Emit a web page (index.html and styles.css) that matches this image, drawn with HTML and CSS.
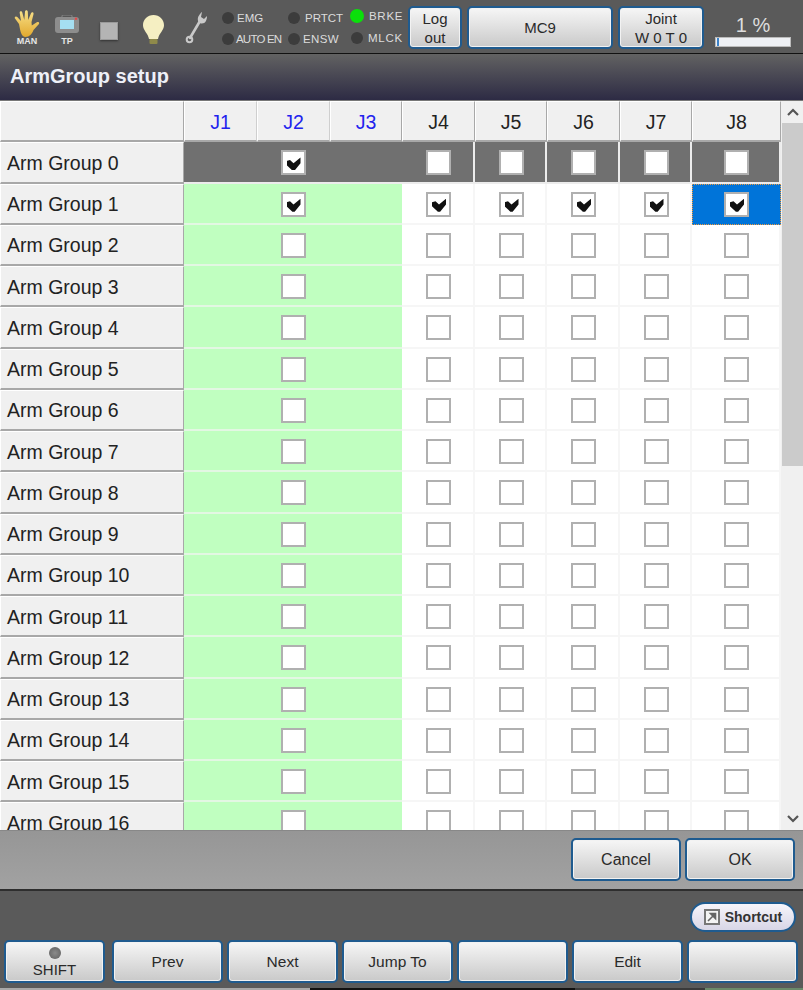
FILE: index.html
```html
<!DOCTYPE html>
<html lang="en">
<head>
<meta charset="utf-8">
<title>ArmGroup setup</title>
<link rel="stylesheet" href="styles.css">
</head>
<body>
<div class="app">
  <header class="topbar">
    <div class="tool tool-man">
      <svg class="icon" width="26" height="27" viewBox="0 0 26 27">
        <defs><linearGradient id="handfill" x1="0" y1="0" x2="0" y2="1"><stop offset="0" stop-color="#f7e08a"/><stop offset="1" stop-color="#e2a92e"/></linearGradient></defs>
        <path fill="url(#handfill)" d="M5 14 1 8.500C0 7 2 5.500 3.300 7L7 11 5.700 3C5.400 1 7.800.6 8.300 2.500L10.300 10 11 1.700C11.100-.3 13.700-.3 13.800 1.700L14.200 10 17 3.300C17.700 1.500 20 2.300 19.500 4.200L17.500 12 17.800 15.500 22.800 12.300C24.700 11.200 26 13.200 24.500 14.500L19.500 20C18 24 15.500 27 11.500 27 7.500 27 6.500 22 5 14Z"/>
      </svg>
      <span class="tool-label">MAN</span>
    </div>
    <div class="tool tool-tp">
      <svg class="icon" width="24" height="18" viewBox="0 0 24 18">
        <rect x="7" y="0" width="10" height="4" rx="1" fill="#555" stroke="#888"/>
        <rect x="0" y="2" width="24" height="16" rx="3" fill="#8d8d8d"/>
        <rect x="5" y="5" width="14" height="9" fill="#a5dff2"/>
        <circle cx="21" cy="3.800" r="1.300" fill="#e04848"/>
      </svg>
      <span class="tool-label">TP</span>
    </div>
    <div class="stop-square"></div>
    <svg class="bulb" width="21" height="30" viewBox="0 0 21 30">
      <path fill="#f5efc2" d="M10.500 0C4.500 0 0 4.500 0 10.200 0 15.500 5 18 6 24H15C16 18 21 15.500 21 10.200 21 4.500 16.500 0 10.500 0Z"/>
      <rect x="6.500" y="24" width="8" height="5" rx="1" fill="#8f8a4a"/>
    </svg>
    <svg class="wrench" width="22" height="32" viewBox="0 0 22 32">
      <path fill="none" stroke="#c9c9c9" stroke-width="2.600" stroke-linecap="round" d="M5 26 15 9"/>
      <circle cx="4.500" cy="27.500" r="2.800" fill="none" stroke="#c9c9c9" stroke-width="2"/>
      <path fill="#c9c9c9" d="M17 0 16 5 19 7 22 4C22 8 20.500 12 16 11.500 12.500 11 12 6 14 3.500 14.800 2 16 .6 17 0Z"/>
    </svg>
    <div class="lamps">
      <div class="lamp-col lamp-col-a">
        <div class="lamp"><i class="dot"></i><span>EMG</span></div>
        <div class="lamp"><i class="dot"></i><span class="tight">AUTO EN</span></div>
      </div>
      <div class="lamp-col lamp-col-b">
        <div class="lamp lamp-wide"><i class="dot"></i><span>PRTCT</span></div>
        <div class="lamp lamp-mid"><i class="dot"></i><span class="loose">ENSW</span></div>
      </div>
      <div class="lamp-col lamp-col-c">
        <div class="lamp lamp-wide"><i class="dot dot-on"></i><span class="spread">BRKE</span></div>
        <div class="lamp lamp-wide"><i class="dot"></i><span class="spread">MLCK</span></div>
      </div>
    </div>
    <button class="btn top-btn top-log">Log<br>out</button>
    <button class="btn top-btn top-mc">MC9</button>
    <button class="btn top-btn top-joint">Joint<br>W 0 T 0</button>
    <div class="speed">
      <div class="speed-text">1 %</div>
      <div class="speed-bar"><i class="speed-fill" style="width:2px"></i></div>
    </div>
  </header>

  <div class="title">ArmGroup setup</div>

  <main class="sheet">
    <div class="grid">
      <div class="hd"></div>
      <div class="hd hd-sys">J1</div><div class="hd hd-sys">J2</div><div class="hd hd-sys">J3</div>
      <div class="hd">J4</div><div class="hd">J5</div><div class="hd">J6</div><div class="hd">J7</div><div class="hd">J8</div>

      <div class="label">Arm Group 0</div>
      <div class="cell merged dark"><span class="cb on"></span></div>
      <div class="cell dark"><span class="cb"></span></div><div class="cell dark"><span class="cb"></span></div><div class="cell dark"><span class="cb"></span></div><div class="cell dark"><span class="cb"></span></div><div class="cell dark"><span class="cb"></span></div>

      <div class="label">Arm Group 1</div>
      <div class="cell merged green"><span class="cb on"></span></div>
      <div class="cell"><span class="cb on"></span></div><div class="cell"><span class="cb on"></span></div><div class="cell"><span class="cb on"></span></div><div class="cell"><span class="cb on"></span></div><div class="cell selected"><span class="cb on"></span></div>

      <div class="label">Arm Group 2</div>
      <div class="cell merged green"><span class="cb"></span></div>
      <div class="cell"><span class="cb"></span></div><div class="cell"><span class="cb"></span></div><div class="cell"><span class="cb"></span></div><div class="cell"><span class="cb"></span></div><div class="cell"><span class="cb"></span></div>

      <div class="label">Arm Group 3</div>
      <div class="cell merged green"><span class="cb"></span></div>
      <div class="cell"><span class="cb"></span></div><div class="cell"><span class="cb"></span></div><div class="cell"><span class="cb"></span></div><div class="cell"><span class="cb"></span></div><div class="cell"><span class="cb"></span></div>

      <div class="label">Arm Group 4</div>
      <div class="cell merged green"><span class="cb"></span></div>
      <div class="cell"><span class="cb"></span></div><div class="cell"><span class="cb"></span></div><div class="cell"><span class="cb"></span></div><div class="cell"><span class="cb"></span></div><div class="cell"><span class="cb"></span></div>

      <div class="label">Arm Group 5</div>
      <div class="cell merged green"><span class="cb"></span></div>
      <div class="cell"><span class="cb"></span></div><div class="cell"><span class="cb"></span></div><div class="cell"><span class="cb"></span></div><div class="cell"><span class="cb"></span></div><div class="cell"><span class="cb"></span></div>

      <div class="label">Arm Group 6</div>
      <div class="cell merged green"><span class="cb"></span></div>
      <div class="cell"><span class="cb"></span></div><div class="cell"><span class="cb"></span></div><div class="cell"><span class="cb"></span></div><div class="cell"><span class="cb"></span></div><div class="cell"><span class="cb"></span></div>

      <div class="label">Arm Group 7</div>
      <div class="cell merged green"><span class="cb"></span></div>
      <div class="cell"><span class="cb"></span></div><div class="cell"><span class="cb"></span></div><div class="cell"><span class="cb"></span></div><div class="cell"><span class="cb"></span></div><div class="cell"><span class="cb"></span></div>

      <div class="label">Arm Group 8</div>
      <div class="cell merged green"><span class="cb"></span></div>
      <div class="cell"><span class="cb"></span></div><div class="cell"><span class="cb"></span></div><div class="cell"><span class="cb"></span></div><div class="cell"><span class="cb"></span></div><div class="cell"><span class="cb"></span></div>

      <div class="label">Arm Group 9</div>
      <div class="cell merged green"><span class="cb"></span></div>
      <div class="cell"><span class="cb"></span></div><div class="cell"><span class="cb"></span></div><div class="cell"><span class="cb"></span></div><div class="cell"><span class="cb"></span></div><div class="cell"><span class="cb"></span></div>

      <div class="label">Arm Group 10</div>
      <div class="cell merged green"><span class="cb"></span></div>
      <div class="cell"><span class="cb"></span></div><div class="cell"><span class="cb"></span></div><div class="cell"><span class="cb"></span></div><div class="cell"><span class="cb"></span></div><div class="cell"><span class="cb"></span></div>

      <div class="label">Arm Group 11</div>
      <div class="cell merged green"><span class="cb"></span></div>
      <div class="cell"><span class="cb"></span></div><div class="cell"><span class="cb"></span></div><div class="cell"><span class="cb"></span></div><div class="cell"><span class="cb"></span></div><div class="cell"><span class="cb"></span></div>

      <div class="label">Arm Group 12</div>
      <div class="cell merged green"><span class="cb"></span></div>
      <div class="cell"><span class="cb"></span></div><div class="cell"><span class="cb"></span></div><div class="cell"><span class="cb"></span></div><div class="cell"><span class="cb"></span></div><div class="cell"><span class="cb"></span></div>

      <div class="label">Arm Group 13</div>
      <div class="cell merged green"><span class="cb"></span></div>
      <div class="cell"><span class="cb"></span></div><div class="cell"><span class="cb"></span></div><div class="cell"><span class="cb"></span></div><div class="cell"><span class="cb"></span></div><div class="cell"><span class="cb"></span></div>

      <div class="label">Arm Group 14</div>
      <div class="cell merged green"><span class="cb"></span></div>
      <div class="cell"><span class="cb"></span></div><div class="cell"><span class="cb"></span></div><div class="cell"><span class="cb"></span></div><div class="cell"><span class="cb"></span></div><div class="cell"><span class="cb"></span></div>

      <div class="label">Arm Group 15</div>
      <div class="cell merged green"><span class="cb"></span></div>
      <div class="cell"><span class="cb"></span></div><div class="cell"><span class="cb"></span></div><div class="cell"><span class="cb"></span></div><div class="cell"><span class="cb"></span></div><div class="cell"><span class="cb"></span></div>

      <div class="label">Arm Group 16</div>
      <div class="cell merged green"><span class="cb"></span></div>
      <div class="cell"><span class="cb"></span></div><div class="cell"><span class="cb"></span></div><div class="cell"><span class="cb"></span></div><div class="cell"><span class="cb"></span></div><div class="cell"><span class="cb"></span></div>
    </div>
    <div class="scrollbar">
      <div class="sb-arrow">
        <svg width="12" height="8" viewBox="0 0 12 8"><path d="M1 7 6 2 11 7" fill="none" stroke="#555" stroke-width="2.200"/></svg>
      </div>
      <div class="sb-thumb"></div>
      <div class="sb-track"></div>
      <div class="sb-arrow">
        <svg width="12" height="8" viewBox="0 0 12 8"><path d="M1 1 6 6 11 1" fill="none" stroke="#555" stroke-width="2.200"/></svg>
      </div>
    </div>
  </main>

  <section class="actions">
    <button class="btn act-btn">Cancel</button>
    <button class="btn act-btn">OK</button>
  </section>

  <footer class="footer">
    <div class="shortcut-row">
      <button class="shortcut">
        <svg width="16" height="16" viewBox="0 0 16 16"><rect x="1" y="1" width="14" height="14" fill="#f4f4f4" stroke="#777" stroke-width="2"/><path d="M4 12 9.500 6.500M6.500 4.500H11.500V9.500Z" fill="#666" stroke="#666" stroke-width="1.600"/></svg>
        <span>Shortcut</span>
      </button>
    </div>
    <div class="fn-row">
      <button class="btn fn-btn fn-shift"><i class="shift-dot"></i><span>SHIFT</span></button>
      <button class="btn fn-btn">Prev</button>
      <button class="btn fn-btn">Next</button>
      <button class="btn fn-btn">Jump To</button>
      <button class="btn fn-btn"></button>
      <button class="btn fn-btn">Edit</button>
      <button class="btn fn-btn"></button>
    </div>
  </footer>
  <div class="edge">
    <i class="edge-a"></i><i class="edge-b"></i><i class="edge-c"></i><i class="edge-d"></i>
  </div>
</div>
</body>
</html>
```

FILE: styles.css
```css
* { box-sizing: border-box; }
html, body { margin: 0; padding: 0; }
body { font-family: "Liberation Sans", Arial, sans-serif; background: #5a5a5a; color: #222; }

.app { width: 803px; height: 990px; display: flex; flex-direction: column; overflow: hidden; }

.btn {
  font-family: inherit;
  font-size: 16px;
  color: #2a2a2a;
  padding: 0;
  border: 2px solid #1f5b8f;
  border-radius: 5px;
  background: linear-gradient(#f6f6f6, #c9c9c9);
  box-shadow: inset 0 0 0 1px #f2f2f2;
}

/* top bar */
.topbar {
  height: 54px;
  flex: none;
  display: flex;
  align-items: flex-start;
  background: #5a5a5a;
  border-bottom: 1px solid #111;
}
.tool { display: flex; flex-direction: column; align-items: center; }
.tool-man { width: 26px; margin: 10px 0 0 14px; }
.tool-tp { width: 24px; margin: 15px 0 0 15px; }
.tool-label { font-size: 9px; line-height: 9px; font-weight: bold; color: #e6e6e6; }
.tool-tp .tool-label { margin-top: 4px; }
.icon { display: block; }
.stop-square {
  width: 18px; height: 18px;
  margin: 22px 0 0 21px;
  background: #b4b4b4;
  border: 1px solid #9a9a9a;
  box-shadow: 0 1px 2px #333;
}
.bulb { margin: 15px 0 0 25px; flex: none; }
.wrench { margin: 12px 0 0 21px; flex: none; }

.lamps { display: flex; margin-left: 15px; width: 186px; flex: none; }
.lamp-col { display: flex; flex-direction: column; }
.lamp-col-a { width: 66px; padding-top: 12px; gap: 9px; }
.lamp-col-b { width: 63px; padding-top: 12px; gap: 9px; }
.lamp-col-c { width: 57px; padding-top: 10px; gap: 10px; }
.lamp { display: flex; align-items: center; gap: 3px; height: 12px; font-size: 11.5px; color: #dcdcdc; white-space: nowrap; }
.lamp-wide { gap: 5px; }
.lamp-mid { gap: 3px; }
.tight { letter-spacing: -.8px; margin-left: -1px; }
.loose { letter-spacing: .4px; }
.spread { letter-spacing: .7px; }
.dot { display: block; width: 12px; height: 12px; border-radius: 50%; background: #3c3c3c; flex: none; }
.dot-on { width: 14px; height: 14px; margin-left: -1px; background: #0be00b; }

.top-btn { height: 43px; margin-top: 6px; font-size: 15px; line-height: 19px; flex: none; }
.top-log { width: 54px; margin-left: 0; }
.top-mc { width: 146px; margin-left: 5px; }
.top-joint { width: 86px; margin-left: 5px; }

.speed { width: 76px; margin: 0 0 0 11px; flex: none; }
.speed-text { text-align: center; font-size: 20px; line-height: 23px; margin-top: 14px; color: #dedede; }
.speed-bar { height: 10px; background: #eef0f4; padding-left: 1px; border: 1px solid #bbb; }
.speed-fill { display: block; height: 100%; background: #3b82c8; }

/* title */
.title {
  height: 47px;
  flex: none;
  padding: 10px 0 0 10px;
  font-size: 20px;
  line-height: 24px;
  font-weight: bold;
  color: #eef0f8;
  background: linear-gradient(#626262, #2d2b44);
  border-bottom: 1px solid #777;
}

/* table */
.sheet { height: 730px; flex: none; display: flex; overflow: hidden; background: #f0f0f0; border-bottom: 1px solid #888; }
.grid {
  width: 781px;
  flex: none;
  display: grid;
  grid-template-columns: 184px 73px 73px 72px 73px 72px 73px 72px 89px;
  grid-auto-rows: 41.25px;
  background: #fff;
}
.hd {
  display: flex; align-items: center; justify-content: center;
  padding-top: 2px;
  font-size: 19.5px;
  color: #222;
  background: #f0f0f0;
  border-top: 1px solid #fff;
  border-left: 1px solid #fff;
  border-right: 1px solid #a8a8a8;
  border-bottom: 2px solid #a8a8a8;
}
.hd-sys { color: #2222ee; border-right-color: #cfcfcf; }
.hd-sys:nth-child(4) { border-right-color: #a8a8a8; }
.label {
  display: flex; align-items: center;
  padding: 2px 0 0 6px;
  font-size: 19.5px;
  color: #222;
  background: #f0f0f0;
  white-space: nowrap;
  border-top: 1px solid #fff;
  border-left: 1px solid #fff;
  border-right: 1px solid #a8a8a8;
  border-bottom: 2px solid #a8a8a8;
}
.cell {
  display: flex; align-items: center; justify-content: center;
  background: #fff;
  box-shadow: inset -2px -2px 0 #f6f6f6;
}
.merged { grid-column: span 3; }
.green { background: #c0ffc0; box-shadow: inset 0 -2px 0 #e3f7e3; }
.dark { background: #707070; box-shadow: inset -2px -2px 0 #ececec; }
.merged.dark { box-shadow: inset 0 -2px 0 #ececec; }
.selected { background: #0074d9; box-shadow: none; outline: 1px dotted #f09a3c; outline-offset: -1px; }

.cb {
  position: relative;
  display: block;
  width: 25px; height: 25px;
  background: #fff;
  border: 2px solid #b0b0b0;
}
.on::after {
  content: "";
  position: absolute;
  left: 4px; top: 5px;
  width: 14px; height: 13px;
  background: #111;
  clip-path: polygon(0 28%, 25% 20%, 50% 46%, 100% 0, 100% 45%, 58% 100%, 42% 100%, 0 58%);
}

.scrollbar { width: 21px; margin-left: 1px; flex: none; display: flex; flex-direction: column; background: #f0f0f0; }
.sb-arrow { height: 22px; flex: none; display: flex; align-items: center; justify-content: center; }
.sb-thumb { height: 343px; flex: none; background: #cbcbcb; }
.sb-track { flex: 1; }

/* actions */
.actions {
  height: 58px;
  flex: none;
  display: flex;
  justify-content: flex-end;
  gap: 4px;
  padding: 7px 8px 0 0;
  background: linear-gradient(#969696, #a2a2a2);
}
.act-btn { width: 110px; height: 43px; }

/* footer */
.footer { flex: 1; background: #5a5a5a; border-top: 2px solid #2e2e2e; padding: 11px 7px 0 4px; }
.shortcut-row { display: flex; justify-content: flex-end; height: 38px; }
.shortcut {
  width: 106px; height: 30px;
  display: flex; align-items: center; justify-content: center; gap: 5px;
  padding: 0;
  font-family: inherit;
  font-size: 14px;
  font-weight: bold;
  color: #333;
  border: 2px solid #1f5b8f;
  border-radius: 15px;
  background: linear-gradient(#f6f5fb, #d8d6e6);
}
.fn-row { display: flex; gap: 4px; width: 794px; }
.fn-btn { width: 111px; height: 43px; flex: none; font-size: 15.5px; }
.fn-shift { width: 101px; margin-right: 3px; display: flex; flex-direction: column; align-items: center; padding-top: 5px; font-size: 15px; line-height: 20px; }
.shift-dot { display: block; width: 12px; height: 12px; border-radius: 50%; background: radial-gradient(#8a8a8a, #5e5e5e); margin-bottom: 1px; }

.edge { height: 2px; flex: none; display: flex; }
.edge i { display: block; height: 100%; }
.edge-a { width: 310px; background: #a8a8a8; }
.edge-b { width: 265px; background: #111; }
.edge-c { width: 130px; background: #3a3a3a; }
.edge-d { width: 98px; background: #6a8a6a; }
```
